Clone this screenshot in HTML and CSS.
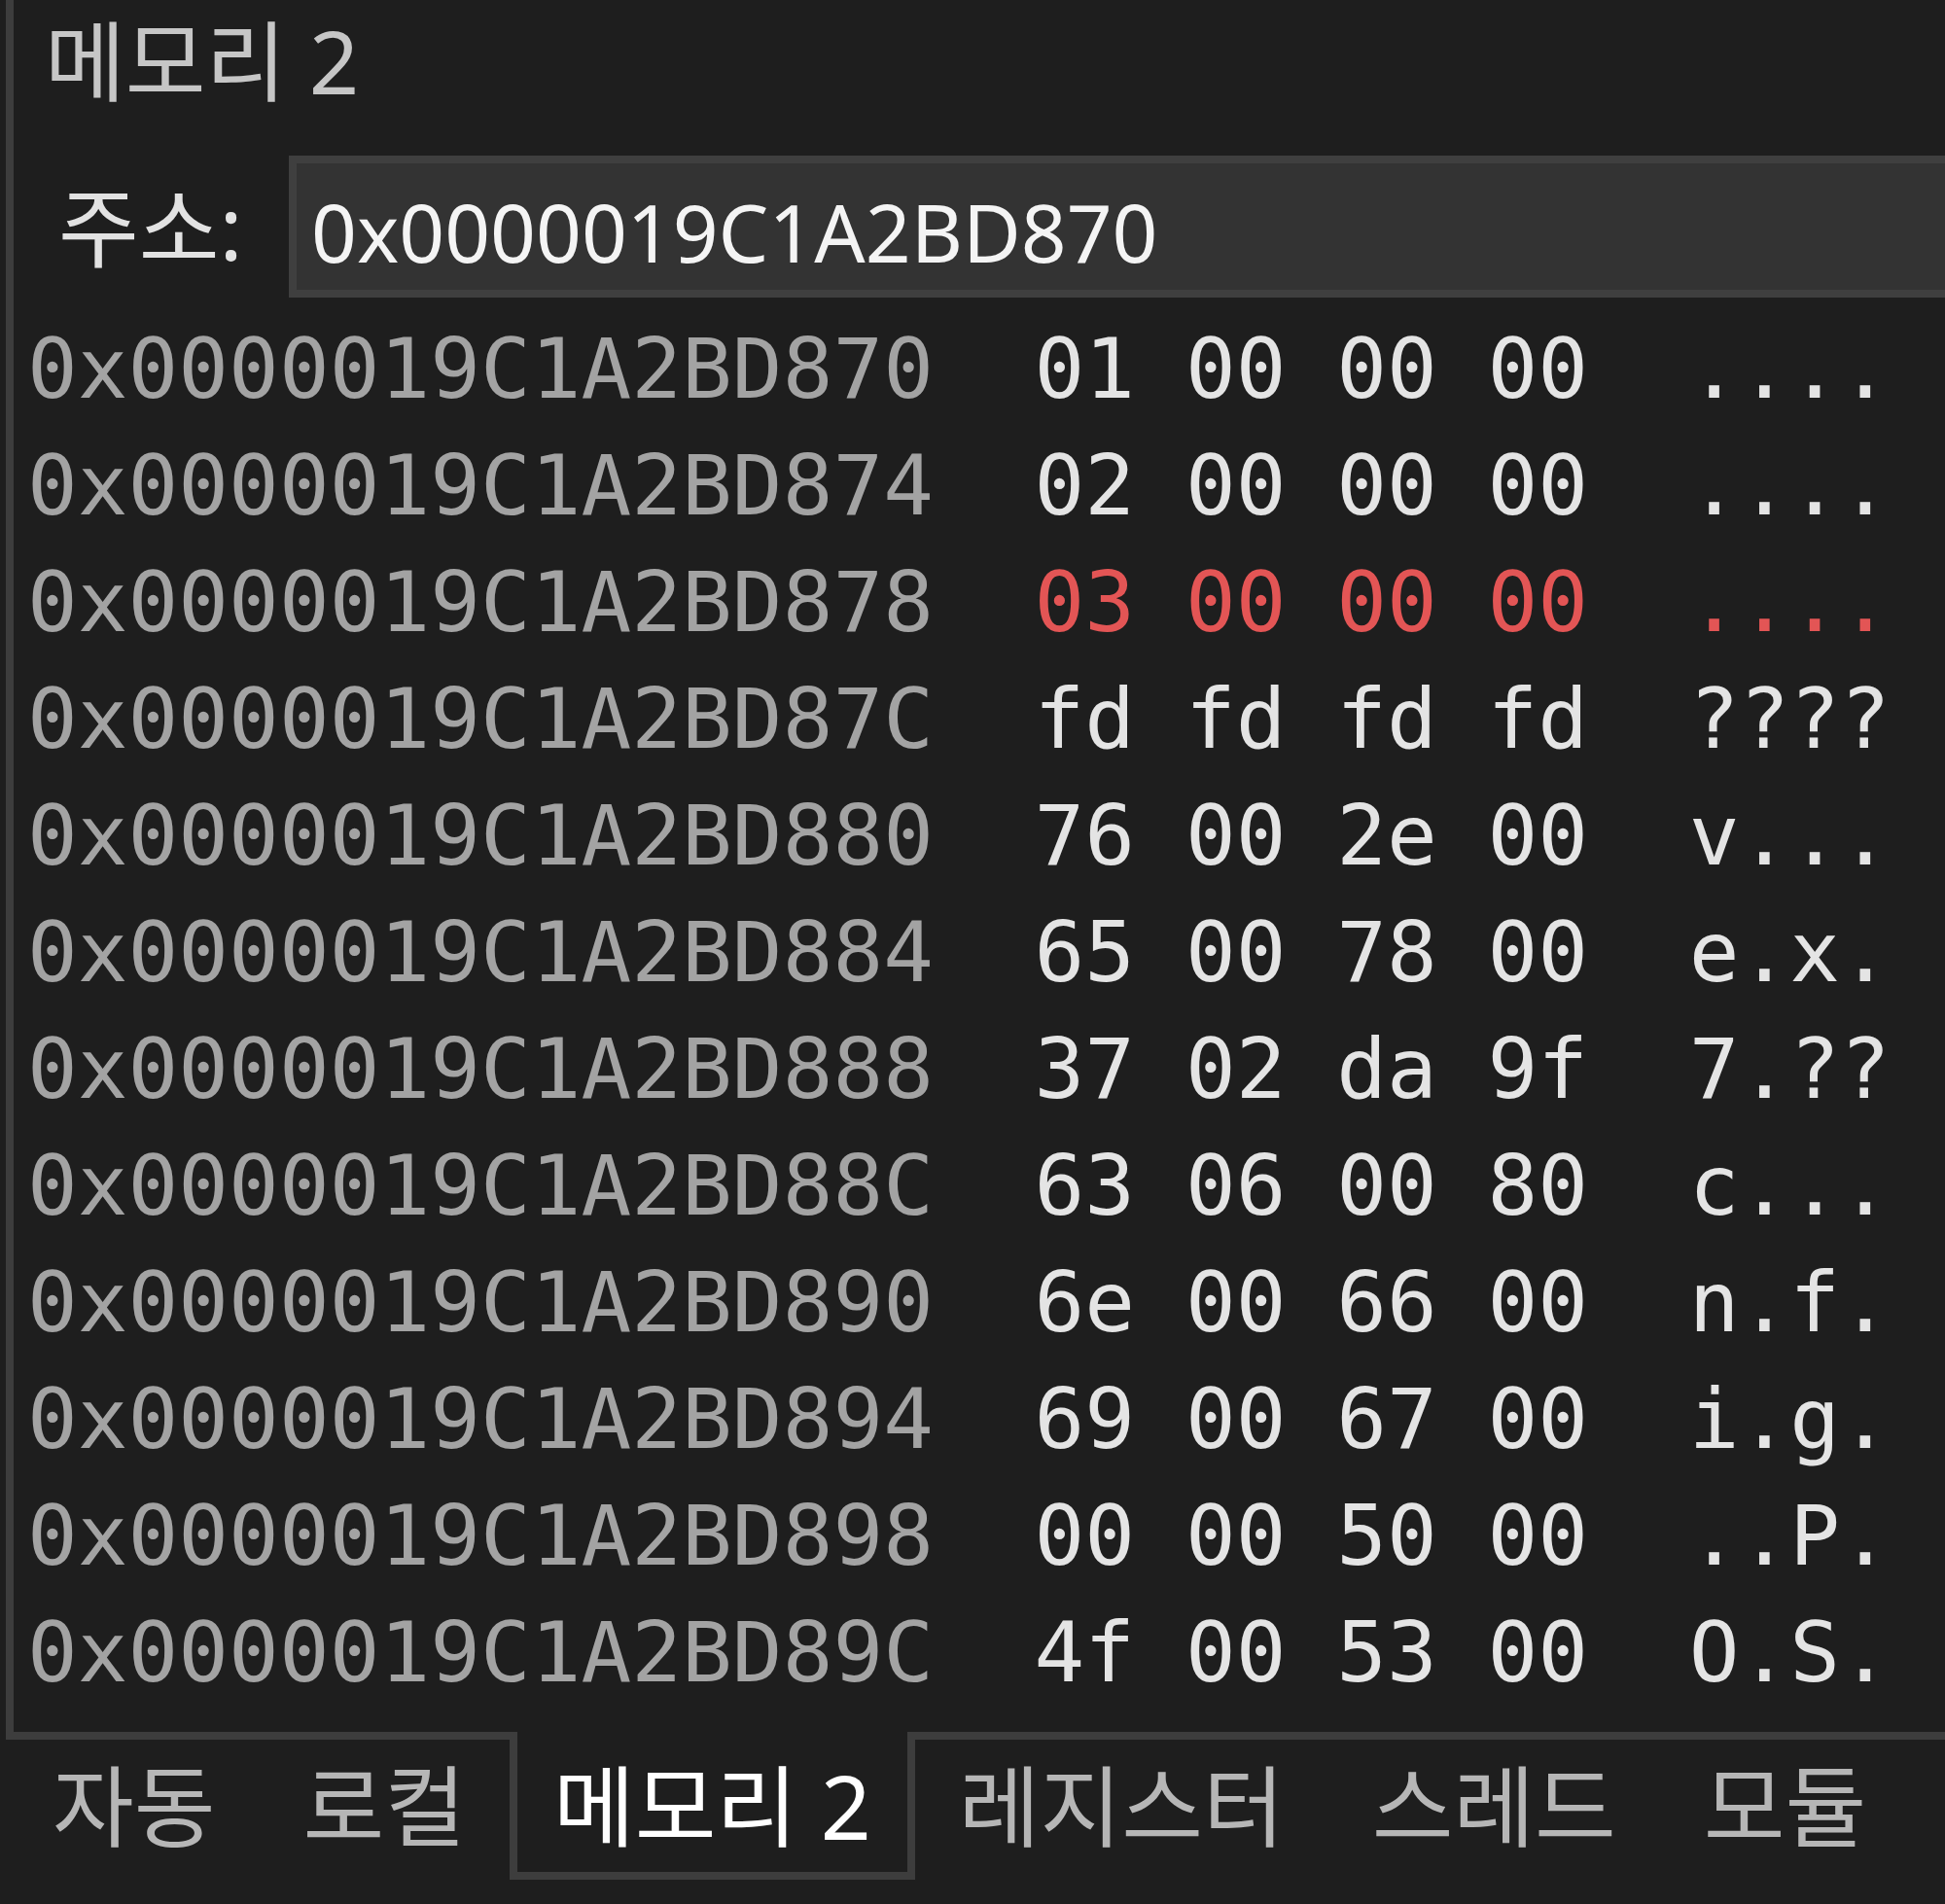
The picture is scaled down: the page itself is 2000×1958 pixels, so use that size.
FILE: index.html
```html
<!DOCTYPE html>
<html lang="ko">
<head>
<meta charset="utf-8">
<title>메모리 2</title>
<link rel="stylesheet" href="styles.css">
</head>
<body>
<div class="window">
  <div class="panel">
    <div class="title">메모리 2</div>
    <div class="addrbar">
      <span class="addr-label">주소:</span>
      <div class="addr-input">0x0000019C1A2BD870</div>
    </div>
    <div class="rows">
      <div class="row"><span class="a">0x0000019C1A2BD870</span>  <span class="b">01 00 00 00</span>  <span class="c">....</span></div>
      <div class="row"><span class="a">0x0000019C1A2BD874</span>  <span class="b">02 00 00 00</span>  <span class="c">....</span></div>
      <div class="row changed"><span class="a">0x0000019C1A2BD878</span>  <span class="b">03 00 00 00</span>  <span class="c">....</span></div>
      <div class="row"><span class="a">0x0000019C1A2BD87C</span>  <span class="b">fd fd fd fd</span>  <span class="c">????</span></div>
      <div class="row"><span class="a">0x0000019C1A2BD880</span>  <span class="b">76 00 2e 00</span>  <span class="c">v...</span></div>
      <div class="row"><span class="a">0x0000019C1A2BD884</span>  <span class="b">65 00 78 00</span>  <span class="c">e.x.</span></div>
      <div class="row"><span class="a">0x0000019C1A2BD888</span>  <span class="b">37 02 da 9f</span>  <span class="c">7.??</span></div>
      <div class="row"><span class="a">0x0000019C1A2BD88C</span>  <span class="b">63 06 00 80</span>  <span class="c">c...</span></div>
      <div class="row"><span class="a">0x0000019C1A2BD890</span>  <span class="b">6e 00 66 00</span>  <span class="c">n.f.</span></div>
      <div class="row"><span class="a">0x0000019C1A2BD894</span>  <span class="b">69 00 67 00</span>  <span class="c">i.g.</span></div>
      <div class="row"><span class="a">0x0000019C1A2BD898</span>  <span class="b">00 00 50 00</span>  <span class="c">..P.</span></div>
      <div class="row"><span class="a">0x0000019C1A2BD89C</span>  <span class="b">4f 00 53 00</span>  <span class="c">O.S.</span></div>
    </div>
  </div>
  <div class="tabs">
    <div class="tab">자동</div>
    <div class="tab">로컬</div>
    <div class="tab active">메모리 2</div>
    <div class="tab">레지스터</div>
    <div class="tab">스레드</div>
    <div class="tab">모듈</div>
  </div>
</div>
</body>
</html>
```
FILE: styles.css
```css
html, body {
  margin: 0;
  padding: 0;
  background: #1e1e1e;
}
body {
  width: 2000px;
  height: 1958px;
  overflow: hidden;
  font-family: "Noto Sans", "Noto Sans CJK KR", sans-serif;
}
.window {
  padding-left: 6px;
}
.panel {
  border-left: 8px solid #3d3d3d;
  border-bottom: 8px solid #3d3d3d;
  height: 1789px;
  box-sizing: border-box;
  overflow: hidden;
}
.title {
  height: 160px;
  box-sizing: border-box;
  padding-left: 32px;
  font-size: 90px;
  line-height: 124px;
  color: #c6c6c6;
  white-space: nowrap;
}
.addrbar {
  display: flex;
  align-items: stretch;
  height: 146px;
}
.addr-label {
  flex: 0 0 283px;
  box-sizing: border-box;
  padding-left: 46px;
  font-size: 90px;
  line-height: 146px;
  color: #e2e2e2;
  white-space: nowrap;
}
.addr-input {
  flex: 1 0 1800px;
  background: #333333;
  border: 8px solid #3f3f3f;
  border-right: none;
  box-sizing: border-box;
  padding: 10px 0 0 15px;
  font-size: 82px;
  line-height: 120px;
  color: #f4f4f4;
  white-space: nowrap;
}
.rows {
  padding-top: 13px;
  padding-left: 14px;
}
.row {
  height: 120px;
  font-family: "DejaVu Sans Mono", "Liberation Mono", monospace;
  font-size: 86px;
  line-height: 120px;
  white-space: pre;
  color: #e4e4e4;
}
.row .a {
  color: #a3a3a3;
}
.row.changed .b,
.row.changed .c {
  color: #e35555;
}
.tabs {
  display: flex;
  margin-top: -8px;
  padding-left: 3px;
}
.tab {
  height: 152px;
  box-sizing: border-box;
  padding: 8px 37px 0;
  border: 8px solid transparent;
  border-top: none;
  font-size: 91px;
  line-height: 136px;
  color: #b6b6b6;
  white-space: nowrap;
}
.tab.active {
  background: #1e1e1e;
  border-color: #3d3d3d;
  color: #ffffff;
}
```
